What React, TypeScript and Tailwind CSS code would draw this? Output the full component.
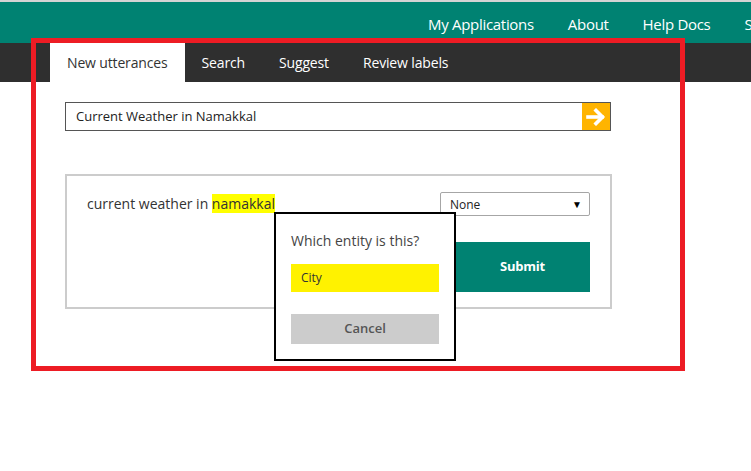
import React from "react";

const font = { fontFamily: '"Open Sans", "Noto Sans", sans-serif' };

function ArrowIcon() {
  return (
    <svg width="20" height="18" viewBox="0 0 20 18" fill="none">
      <path d="M2 9h14" stroke="white" strokeWidth="3.6" strokeLinecap="square" />
      <path d="M10 2.5l6.5 6.5-6.5 6.5" stroke="white" strokeWidth="3.6" strokeLinecap="square" />
    </svg>
  );
}

export default function App() {
  const topLinks = ["My Applications", "About", "Help Docs", "Settings"];
  const tabs = ["New utterances", "Search", "Suggest", "Review labels"];

  return (
    <div className="relative w-[751px] h-[471px] overflow-hidden bg-white" style={font}>
      {/* top header */}
      <div className="border-t-2 border-[#d4d4d4] bg-[#008272] h-[43px] flex items-center pl-[428px] pt-[3px] gap-[34px] whitespace-nowrap overflow-hidden text-white text-[15px] tracking-[-0.3px]">
        {topLinks.map((l) => (
          <span key={l}>{l}</span>
        ))}
      </div>

      {/* tabs */}
      <div className="bg-[#2f2f2f] h-[39px] flex pl-[50px] text-[14px] tracking-[-0.15px]">
        {tabs.map((t, i) => (
          <div
            key={t}
            className={`px-[17px] flex items-center ${i === 0 ? "bg-white text-[#333]" : "text-white"}`}
          >
            {t}
          </div>
        ))}
      </div>

      {/* content */}
      <div className="pl-[65px] pt-[20px] w-[612px]">
        <div className="flex h-[29px] border border-[#555] w-[546px]">
          <div className="flex-1 flex items-center pl-[10px] text-[13px] text-[#222]">
            Current Weather in Namakkal
          </div>
          <div className="w-[28px] bg-[#ffb400] flex items-center justify-center">
            <ArrowIcon />
          </div>
        </div>

        <div className="mt-[43px] border-2 border-[#cccccc] h-[135px] flex justify-between pl-[20px] pr-[20px] pt-[16px]">
          <div className="text-[14px] text-[#333] leading-[22px] mt-[1px]">
            current weather in <span className="bg-[#ffff00]">namakkal</span>
          </div>
          <div className="flex flex-col items-end">
            <div className="w-[150px] h-[24px] border border-[#a6a6a6] rounded-[2px] flex items-center justify-between pl-[9px] pr-[7px] text-[12px] text-[#222]">
              <span className="mt-[2px]">None</span>
              <span className="text-[10px] text-black">▼</span>
            </div>
            <button className="mt-[26px] w-[135px] h-[50px] bg-[#008272] text-white font-bold text-[13px] tracking-[-0.2px]">
              Submit
            </button>
          </div>
        </div>
      </div>

      {/* entity popup */}
      <div className="absolute left-[274px] top-[212px] w-[182px] h-[149px] border-2 border-black bg-white px-[15px] pt-[17px]">
        <div className="text-[14px] text-[#444] leading-[20px]">Which entity is this?</div>
        <div className="mt-[13px] h-[28px] bg-[#fff200] flex items-center pl-[10px] text-[12px] text-[#333]">City</div>
        <button className="mt-[22px] w-full h-[30px] bg-[#cccccc] text-[#555] font-semibold text-[13px]">
          Cancel
        </button>
      </div>

      {/* annotation rectangle */}
      <div className="absolute left-[31px] top-[38px] w-[654px] h-[333px] border-[5px] border-[#ed1c24] pointer-events-none" />
    </div>
  );
}
